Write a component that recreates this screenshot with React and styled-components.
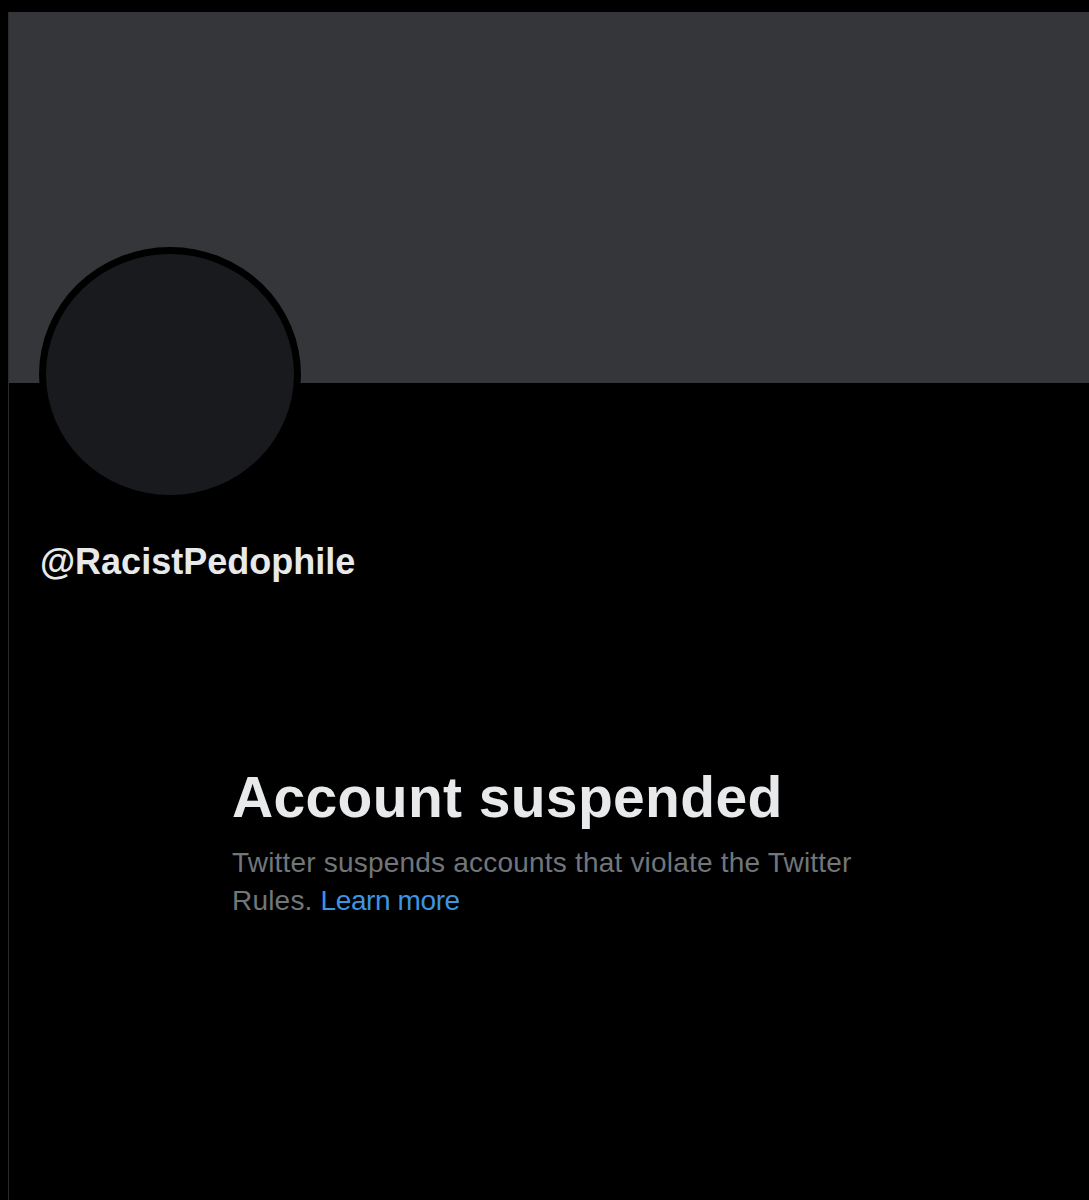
import React from 'react';
import styled, { createGlobalStyle } from 'styled-components';

const GlobalStyle = createGlobalStyle`
    html, body {
        margin: 0;
        padding: 0;
        background: #000;
    }
    body {
        font-family: "Liberation Sans", Arial, sans-serif;
        -webkit-font-smoothing: antialiased;
    }
`;

const Page = styled.div`
    min-height: 1200px;
    background: #000;
    padding: 12px 0 0 8px;
    box-sizing: border-box;
`;

const Column = styled.div`
    min-height: 1188px;
    border-left: 1px solid #2a2c2f;
    display: flex;
    flex-direction: column;
`;

const Banner = styled.div`
    height: 371px;
    background: #35363a;
`;

const Avatar = styled.div`
    width: 262px;
    height: 255px;
    margin: -136px 0 0 30px;
    border-radius: 50%;
    border: 7px solid #000;
    box-sizing: border-box;
    background: #191a1e;
`;

const Handle = styled.div`
    margin: 38px 0 0 31px;
    font-size: 36px;
    line-height: 44px;
    font-weight: 700;
    color: #e7e9ea;
`;

const Notice = styled.div`
    margin: 181px 0 0 223px;
    max-width: 640px;
`;

const Title = styled.h1`
    margin: 0;
    font-size: 57px;
    line-height: 64px;
    font-weight: 700;
    letter-spacing: 0.35px;
    color: #e7e9ea;
`;

const Message = styled.p`
    margin: 15px 0 0;
    font-size: 28px;
    line-height: 38px;
    letter-spacing: 0.2px;
    color: #71767b;
`;

const Link = styled.a`
    color: #3d94e0;
    text-decoration: none;
    letter-spacing: -0.4px;
`;

const App = () => (
    <>
        <GlobalStyle />
        <Page>
            <Column>
                <Banner />
                <Avatar />
                <Handle>@RacistPedophile</Handle>
                <Notice>
                    <Title>Account suspended</Title>
                    <Message>
                        Twitter suspends accounts that violate the Twitter Rules.{' '}
                        <Link href="#">Learn more</Link>
                    </Message>
                </Notice>
            </Column>
        </Page>
    </>
);

export default App;
